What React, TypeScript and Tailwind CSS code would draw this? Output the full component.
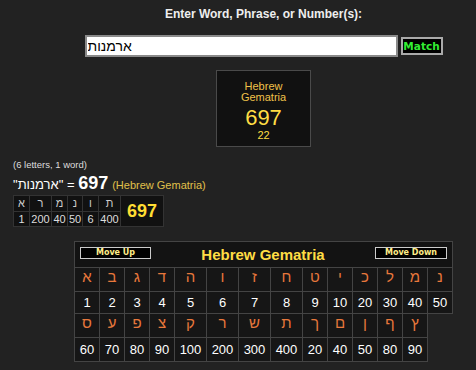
const letters1 = ['א', 'ב', 'ג', 'ד', 'ה', 'ו', 'ז', 'ח', 'ט', 'י', 'כ', 'ל', 'מ', 'נ']
const values1 = [1, 2, 3, 4, 5, 6, 7, 8, 9, 10, 20, 30, 40, 50]
const letters2 = ['ס', 'ע', 'פ', 'צ', 'ק', 'ר', 'ש', 'ת', 'ך', 'ם', 'ן', 'ף', 'ץ']
const values2 = [60, 70, 80, 90, 100, 200, 300, 400, 20, 40, 50, 80, 90]

// word breakdown for the small table
const breakdown = [
  { l: 'א', v: 1, w: 'w-[16px]' },
  { l: 'ר', v: 200, w: 'w-[22px]' },
  { l: 'מ', v: 40, w: 'w-[16px]' },
  { l: 'נ', v: 50, w: 'w-[15px]' },
  { l: 'ו', v: 6, w: 'w-[16px]' },
  { l: 'ת', v: 400, w: 'w-[22px]' },
]

const LetterCell = ({ ch }: { ch: string }) => (
  <div className="h-[24px] border-r border-b border-[#444] bg-[#161616] flex items-center justify-center pb-[5px] text-[15px] leading-[18px] text-[#e8783c]">
    {ch}
  </div>
)

const NumberCell = ({ n, h }: { n: number; h: string }) => (
  <div className={`${h} border-r border-b border-[#444] bg-[#161616] flex items-center justify-center text-[13px] leading-[15px] text-white`}>
    {n}
  </div>
)

const App = () => {
  return (
    <div className="min-h-[370px] w-full overflow-hidden bg-[#222] font-['Liberation_Sans',Arial,sans-serif] text-[#ddd]">
      {/* search form + result box */}
      <div className="pl-[51px]">
        <div className="pt-[7px] text-center text-[12px] font-bold leading-[14px] text-[#eee]">
          Enter Word, Phrase, or Number(s):
        </div>
        <div className="mt-[14px] flex items-center justify-center gap-[3px]">
          <input
            defaultValue="ארמנות"
            className="h-[22px] w-[313px] border-2 border-[#8a8a8a] bg-white px-[1px] text-[14px] text-black outline-none"
          />
          <button className="h-[18px] w-[42px] border-2 border-[#aaa] bg-black font-['DejaVu_Sans',Verdana,sans-serif] text-[10.5px] font-bold leading-none text-[#33ee33]">
            Match
          </button>
        </div>
        <div className="mx-auto mt-[13px] flex h-[77px] w-[95px] flex-col items-center border border-[#4a4a4a] bg-[#111] pt-[10px] text-[#f0c24a]">
          <div className="text-[11px] leading-[11px]">Hebrew</div>
          <div className="text-[11px] leading-[11px]">Gematria</div>
          <div className="mt-[4px] text-[22px] leading-[22px] text-[#ffdd44]">697</div>
          <div className="mt-[1px] text-[11px] leading-[11px] text-[#ffdd44]">22</div>
        </div>
      </div>

      {/* word summary */}
      <div className="pl-[13px]">
        <div className="mt-[12px] text-[9.5px] leading-[11px] text-[#ddd]">(6 letters, 1 word)</div>
        <div className="flex h-[20px] items-baseline text-white">
          <span className="text-[13px]">
            "<bdi>ארמנות</bdi>" =&nbsp;
          </span>
          <span className="text-[18px] font-bold">697</span>
          <span className="ml-[4px] text-[11px] text-[#e0c04a]">(Hebrew Gematria)</span>
        </div>
        <div className="mt-[5px] flex w-max border-l border-t border-[#333] bg-[#111]">
          {breakdown.map((b, i) => (
            <div key={i} className={`${b.w} flex flex-col`}>
              <div className="flex h-[16px] items-center justify-center border-r border-b border-[#333] text-[11px] text-[#ccc]">
                {b.l}
              </div>
              <div className="flex h-[15px] items-center justify-center border-r border-b border-[#333] text-[11px] text-[#ddd]">
                {b.v}
              </div>
            </div>
          ))}
          <div className="flex h-[31px] w-[43px] items-center justify-center border-r border-b border-[#333] text-[18px] font-bold text-[#ffdd33]">
            697
          </div>
        </div>
      </div>

      {/* gematria chart */}
      <div className="pl-[51px]">
        <div className="mx-auto mt-[14px] grid w-[379px] grid-cols-[25px_25px_25px_25px_32px_32px_32px_32px_25px_25px_25px_25px_25px_25px] border-l border-t border-[#444]">
          <div className="col-span-full flex h-[26px] items-center justify-between border-r border-b border-[#444] bg-[#131313] px-[5px]">
            <button className="mb-[3px] h-[12px] w-[71px] border border-[#ccc] bg-black font-['DejaVu_Sans',Verdana,sans-serif] text-[8px] font-bold leading-none text-[#ffee88]">
              Move Up
            </button>
            <div className="text-[15px] font-bold leading-[18px] text-[#ffdd44]">Hebrew Gematria</div>
            <button className="mb-[3px] h-[12px] w-[72px] border border-[#ccc] bg-black font-['DejaVu_Sans',Verdana,sans-serif] text-[8px] font-bold leading-none text-[#ffee88]">
              Move Down
            </button>
          </div>
          {letters1.map((l, i) => (
            <LetterCell key={'a' + i} ch={l} />
          ))}
          {values1.map((n, i) => (
            <NumberCell key={'b' + i} n={n} h="h-[22px]" />
          ))}
          {letters2.map((l, i) => (
            <LetterCell key={'c' + i} ch={l} />
          ))}
          <div />
          {values2.map((n, i) => (
            <NumberCell key={'d' + i} n={n} h="h-[24px]" />
          ))}
        </div>
      </div>
    </div>
  )
}

export default App
